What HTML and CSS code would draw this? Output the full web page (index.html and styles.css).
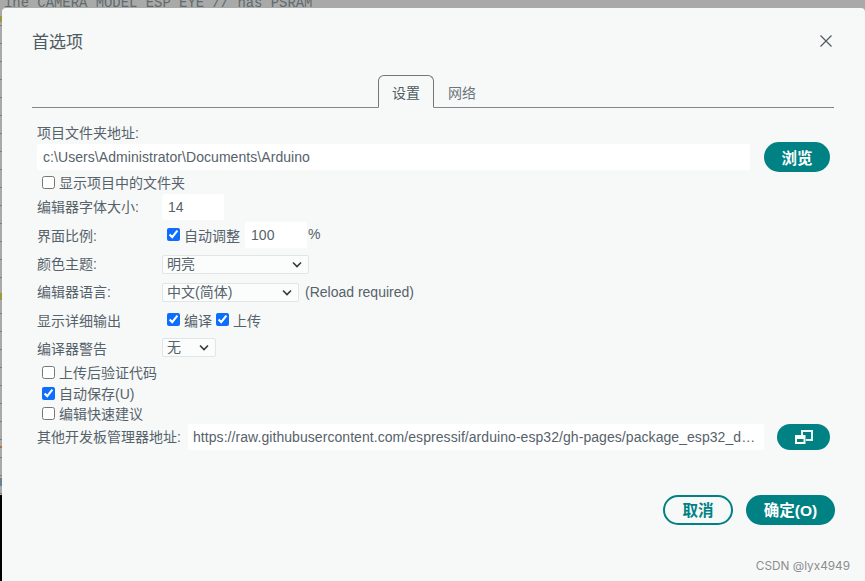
FILE: index.html
```html
<!DOCTYPE html>
<html lang="zh-CN">
<head>
<meta charset="utf-8">
<title>首选项</title>
<link rel="stylesheet" href="styles.css">
</head>
<body>
<div class="backdrop-code">ine CAMERA_MODEL_ESP_EYE // has PSRAM</div>
<div class="stage">
  <div class="gutter"></div>
  <main class="dialog">
    <header class="dialog-head">
      <h1 class="dialog-title">首选项</h1>
      <svg class="close" width="12" height="12" viewBox="0 0 12 12"><path d="M.5.5l11 11M11.500.5l-11 11"/></svg>
    </header>
    <nav class="tabs">
      <span class="tab tab-active">设置</span>
      <span class="tab">网络</span>
    </nav>
    <form class="form">
      <div class="path-label">项目文件夹地址:</div>
      <div class="path-row">
        <input class="field field-path" type="text" value="c:\Users\Administrator\Documents\Arduino">
        <button class="btn btn-browse" type="button">浏览</button>
      </div>
      <label class="check-row check-first"><input type="checkbox">显示项目中的文件夹</label>

      <div class="row row-font">
        <span class="row-label">编辑器字体大小:</span>
        <input class="field field-num" type="text" value="14">
      </div>
      <div class="row row-scale">
        <span class="row-label">界面比例:</span>
        <label class="check check-scale"><input type="checkbox" checked>自动调整</label>
        <input class="field field-num field-scale" type="text" value="100">
        <span class="unit">%</span>
      </div>
      <div class="row row-theme">
        <span class="row-label">颜色主题:</span>
        <select class="select select-theme"><option>明亮</option></select>
      </div>
      <div class="row row-lang">
        <span class="row-label">编辑器语言:</span>
        <select class="select select-lang"><option>中文(简体)</option></select>
        <span class="note">(Reload required)</span>
      </div>
      <div class="row row-verbose">
        <span class="row-label">显示详细输出</span>
        <label class="check check-scale"><input type="checkbox" checked>编译</label>
        <label class="check check-upload"><input type="checkbox" checked>上传</label>
      </div>
      <div class="row row-warn">
        <span class="row-label">编译器警告</span>
        <select class="select select-warn"><option>无</option></select>
      </div>
      <label class="check-row"><input type="checkbox">上传后验证代码</label>
      <label class="check-row check-save"><input type="checkbox" checked>自动保存(U)</label>
      <label class="check-row"><input type="checkbox">编辑快速建议</label>

      <div class="board-row">
        <span class="board-label">其他开发板管理器地址:</span>
        <input class="field field-board" type="text" value="https://raw.githubusercontent.com/espressif/arduino-esp32/gh-pages/package_esp32_dev_index.json">
        <button class="btn btn-icon" type="button" aria-label="打开">
          <svg width="18" height="14" viewBox="0 0 18 14"><path class="icon-back" d="M7 5V1h10v9h-6"/><rect class="icon-front" x="1" y="6" width="8.500" height="7"/><path class="icon-bar" d="M1 7.500h8.500"/></svg>
        </button>
      </div>
    </form>
    <footer class="dialog-foot">
      <button class="btn btn-cancel" type="button">取消</button>
      <button class="btn btn-ok" type="button">确定(O)</button>
    </footer>
  </main>
</div>
<div class="watermark">CSDN @lyx4949</div>
</body>
</html>
```

FILE: styles.css
```css
* { box-sizing: border-box; }
html, body { height: 100%; }
body {
  margin: 0;
  height: 581px;
  overflow: hidden;
  position: relative;
  display: flex;
  flex-direction: column;
  background: #a9a9a9;
  color: #56626a;
  font-family: "Liberation Sans", "Noto Sans CJK SC", sans-serif;
  font-size: 14px;
}
.backdrop-code {
  height: 8px;
  flex: none;
  overflow: hidden;
  padding-left: 4px;
  font: 13.9px/6px "Liberation Mono", monospace;
  color: #5f6b6c;
  white-space: pre;
}
.stage { flex: 1; display: flex; min-height: 0; }
.gutter {
  width: 2px;
  flex: none;
  background:
    linear-gradient(#000, #000) 0 487px / 100% 100% no-repeat,
    linear-gradient(#6a7f96, #6a7f96) 0 470px / 100% 8px no-repeat,
    linear-gradient(#b07040, #b07040) 0 438px / 100% 2px no-repeat,
    linear-gradient(#9a9a40, #9a9a40) 0 285px / 100% 7px no-repeat,
    linear-gradient(#9a9a40, #9a9a40) 0 8px / 100% 6px no-repeat,
    repeating-linear-gradient(#a9a9a9 0 17px, #808080 17px 18px);
}
.dialog {
  flex: 1;
  display: flex;
  flex-direction: column;
  background: #f7f9f9;
  border-radius: 4px 4px 0 0;
  padding: 0 30px;
}
.dialog-head {
  height: 67px;
  flex: none;
  display: flex;
  align-items: center;
  justify-content: space-between;
}
.dialog-title {
  margin: 2px 0 0;
  font-size: 17px;
  font-weight: 400;
  line-height: 24px;
  color: #4e5b61;
}
.close { margin-right: 3px; margin-top: -1px; }
.close path { fill: none; stroke: #4e5b61; stroke-width: 1.2; }
.tabs {
  height: 33px;
  flex: none;
  margin-right: 1px;
  padding-left: 2px;
  display: flex;
  justify-content: center;
  border-bottom: 1px solid #7f8789;
}
.tab {
  width: 56px;
  height: 33px;
  text-align: center;
  line-height: 36px;
  color: #6b767b;
  font-size: 14px;
}
.tab-active {
  background: #f7f9f9;
  border: 1px solid #6f787b;
  border-bottom-color: #f7f9f9;
  border-radius: 6px 6px 0 0;
  line-height: 34px;
  color: #4e5b61;
}
.form { padding: 0 5px; flex: none; }
.path-label { height: 18px; margin-top: 16px; line-height: 18px; }
.path-row { display: flex; align-items: center; gap: 14px; height: 30px; }
.field {
  border: 0;
  outline: 0;
  background: #fff;
  height: 26px;
  border-radius: 3px;
  padding: 0 6px;
  color: #56626a;
  letter-spacing: .06px;
  font: 14px "Liberation Sans", "Noto Sans CJK SC", sans-serif;
}
.field-path { width: 713px; }
.btn {
  border: 0;
  border-radius: 15px;
  background: #008184;
  color: #fff;
  font: 700 15.5px "Liberation Sans", "Noto Sans CJK SC", sans-serif;
  padding: 0;
}
.btn-browse { width: 66px; height: 30px; }
.check-row {
  height: 20px;
  display: flex;
  align-items: center;
  padding: 0 0 2px 5px;
}
.check-first { margin-top: 1px; }
.check-save { margin-top: 1px; }
.check-row input, .check input {
  width: 13px;
  height: 13px;
  margin: 0 4px 0 0;
  accent-color: #0d6efd;
  flex: none;
}
.row { height: 28px; display: flex; align-items: center; }
.row-scale, .row-verbose { height: 29px; }
.row-label { width: 125px; flex: none; padding-bottom: 2px; }
.field-num { width: 62px; }
.check { display: flex; align-items: center; padding-bottom: 2px; }
.check-scale { margin-left: 5px; }
.check-upload { margin-left: 4px; }
.field-scale { margin-left: 5px; margin-top: -2px; }
.unit { margin-left: 1px; margin-top: -3px; }
.select {
  appearance: none;
  height: 19px;
  padding: 0 0 0 4px;
  border: 1px solid #e1e5e6;
  border-radius: 2px;
  background: #fbfcfc url("data:image/svg+xml,%3Csvg xmlns='http://www.w3.org/2000/svg' width='10' height='7' viewBox='0 0 10 7'%3E%3Cpath d='M1 1.500l4 4 4-4' fill='none' stroke='%23343a40' stroke-width='1.600'/%3E%3C/svg%3E") no-repeat right 6px center;
  color: #56626a;
  font: 14px/17px "Liberation Sans", "Noto Sans CJK SC", sans-serif;
  outline: 0;
}
.select-theme { width: 147px; }
.select-lang { width: 137px; }
.select-warn { width: 54px; margin-top: -3px; }
.note { margin-left: 6px; }
.board-row { display: flex; align-items: center; height: 26px; }
.board-label { width: 151px; flex: none; padding-bottom: 2px; }
.field-board {
  width: 576px;
  padding: 0 5px;
  text-overflow: ellipsis;
}
.btn-icon {
  width: 53px;
  height: 26px;
  margin-left: 13px;
  border-radius: 13px;
  display: flex;
  align-items: center;
  justify-content: center;
}
.icon-back { fill: none; stroke: #eaf6f6; stroke-width: 2; }
.icon-front { fill: #008184; stroke: #fff; stroke-width: 2; }
.icon-bar { fill: none; stroke: #fff; stroke-width: 3; }
.dialog-foot {
  margin-top: 45px;
  display: flex;
  justify-content: flex-end;
  gap: 13px;
}
.btn-cancel {
  width: 70px;
  height: 30px;
  background: transparent;
  border: 2px solid #008184;
  color: #008184;
  padding-bottom: 2px;
}
.btn-ok { width: 89px; height: 30px; padding-bottom: 2px; }
.watermark {
  position: absolute;
  right: 15px;
  top: 558px;
  color: #8d8d8d;
  font: 11.800px/16px Inter, "Liberation Sans", sans-serif;
}
```
